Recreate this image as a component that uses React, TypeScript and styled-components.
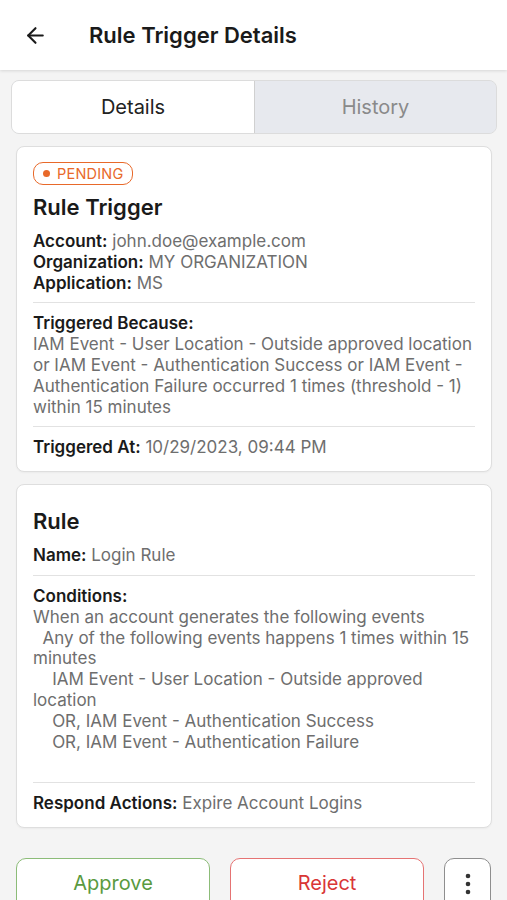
import React from "react";
import styled, { createGlobalStyle } from "styled-components";
import { ArrowLeft } from "lucide-react";

const GlobalStyle = createGlobalStyle`
  html, body {
    margin: 0;
    padding: 0;
    background: #f4f4f4;
    font-family: Inter, "Noto Sans", sans-serif;
    color: #1a1a1a;
  }
  * { box-sizing: border-box; }
`;

const Page = styled.div`
  width: 507px;
  min-height: 900px;
  overflow: hidden;
`;

const Header = styled.header`
  height: 70px;
  background: #ffffff;
  display: flex;
  align-items: center;
  padding-left: 23px;
  box-shadow: 0 1px 3px rgba(0, 0, 0, 0.12);
`;

const BackButton = styled.button`
  border: none;
  background: none;
  padding: 0;
  display: flex;
  color: #1a1a1a;
  margin-right: 41px;
`;

const Title = styled.h1`
  margin: 0;
  font-size: 22px;
  font-weight: 600;
`;

const Content = styled.main`
  padding: 10px 15px 0 16px;
  display: flex;
  flex-direction: column;
  gap: 12px;
`;

const Tabs = styled.div`
  margin: 0 -5px;
  height: 54px;
  display: grid;
  grid-template-columns: 243px 1fr;
  border: 1px solid #dcdcdc;
  border-radius: 8px;
  overflow: hidden;
  background: #e7e9ee;
`;

const Tab = styled.button<{ $active?: boolean }>`
  border: none;
  font-family: inherit;
  font-size: 20px;
  background: ${(p) => (p.$active ? "#ffffff" : "#e7e9ee")};
  color: ${(p) => (p.$active ? "#222" : "#8a8a8a")};
  border-right: ${(p) => (p.$active ? "1px solid #d0d0d0" : "none")};
`;

const Card = styled.section<{ $top?: number }>`
  background: #ffffff;
  border: 1px solid #dedede;
  border-radius: 8px;
  padding: ${(p) => p.$top ?? 14}px 16px 13px 16px;
  box-shadow: 0 1px 2px rgba(0, 0, 0, 0.04);
`;

const Badge = styled.span`
  display: inline-flex;
  align-items: center;
  gap: 7px;
  height: 23px;
  padding: 0 9px 0 9px;
  border: 1.5px solid #e8692a;
  border-radius: 10px;
  color: #e8692a;
  font-size: 14.5px;
  letter-spacing: 0.2px;
`;

const Dot = styled.span`
  width: 7px;
  height: 7px;
  border-radius: 50%;
  background: #e8692a;
`;

const CardTitle = styled.h2`
  margin: 7px 0 9px;
  font-size: 22px;
  font-weight: 600;
  line-height: 30px;
`;

const Line = styled.div`
  font-size: 17px;
  line-height: 20.8px;
`;

const Label = styled.span`
  font-weight: 600;
  color: #1a1a1a;
`;

const Value = styled.span`
  color: #6e6e6e;
`;

const Block = styled.div`
  font-size: 17px;
  line-height: 20.8px;
  color: #6e6e6e;
  white-space: pre-wrap;
`;

const Divider = styled.hr`
  border: none;
  border-top: 1px solid #e2e2e2;
  margin: 9px 0 10px;
`;

const Actions = styled.div`
  margin-top: 18px;
  display: grid;
  grid-template-columns: 194px 194px 47px;
  column-gap: 20px;
`;

const ActionButton = styled.button<{ $color: string; $border: string }>`
  height: 56px;
  background: #ffffff;
  border: 1.5px solid ${(p) => p.$border};
  border-radius: 10px;
  color: ${(p) => p.$color};
  font-family: inherit;
  font-size: 20px;
  padding: 0 0 6px;
`;

const MoreButton = styled.button`
  height: 56px;
  background: #ffffff;
  border: 1.5px solid #8e8e8e;
  border-radius: 10px;
  display: flex;
  justify-content: center;
  padding-top: 14px;
`;

const conditions = `When an account generates the following events
  Any of the following events happens 1 times within 15 minutes
    IAM Event - User Location - Outside approved location
    OR, IAM Event - Authentication Success
    OR, IAM Event - Authentication Failure

`;

export default function App() {
  return (
    <Page>
      <GlobalStyle />
      <Header>
        <BackButton>
          <ArrowLeft size={25} strokeWidth={2} />
        </BackButton>
        <Title>Rule Trigger Details</Title>
      </Header>
      <Content>
        <Tabs>
          <Tab $active>Details</Tab>
          <Tab>History</Tab>
        </Tabs>
        <Card>
          <Badge>
            <Dot />
            PENDING
          </Badge>
          <CardTitle>Rule Trigger</CardTitle>
          <Line>
            <Label>Account:</Label> <Value>john.doe@example.com</Value>
          </Line>
          <Line>
            <Label>Organization:</Label> <Value>MY ORGANIZATION</Value>
          </Line>
          <Line>
            <Label>Application:</Label> <Value>MS</Value>
          </Line>
          <Divider />
          <Line>
            <Label>Triggered Because:</Label>
          </Line>
          <Block>
            IAM Event - User Location - Outside approved location or IAM Event - Authentication
            Success or IAM Event - Authentication Failure occurred 1 times (threshold - 1) within 15
            minutes
          </Block>
          <Divider />
          <Line>
            <Label>Triggered At:</Label> <Value>10/29/2023, 09:44 PM</Value>
          </Line>
        </Card>
        <Card $top={14}>
          <CardTitle>Rule</CardTitle>
          <Line>
            <Label>Name:</Label> <Value>Login Rule</Value>
          </Line>
          <Divider />
          <Line>
            <Label>Conditions:</Label>
          </Line>
          <Block>{conditions}</Block>
          <Divider />
          <Line>
            <Label>Respond Actions:</Label> <Value>Expire Account Logins</Value>
          </Line>
        </Card>
        <Actions>
          <ActionButton $color="#5a9a3f" $border="#8cbc78">
            Approve
          </ActionButton>
          <ActionButton $color="#d93636" $border="#e57373">
            Reject
          </ActionButton>
          <MoreButton>
            <svg width="6" height="22" viewBox="0 0 6 22">
              <circle cx="3" cy="3" r="2.3" fill="#333" />
              <circle cx="3" cy="11" r="2.3" fill="#333" />
              <circle cx="3" cy="19" r="2.3" fill="#333" />
            </svg>
          </MoreButton>
        </Actions>
      </Content>
    </Page>
  );
}
